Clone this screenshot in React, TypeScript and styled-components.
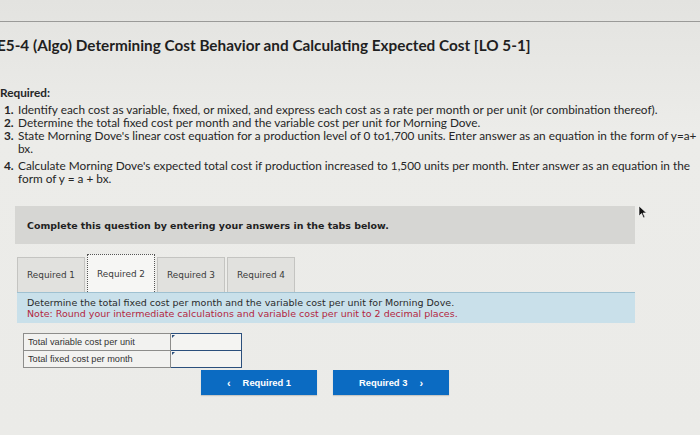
import styled, { createGlobalStyle } from "styled-components";

const GlobalStyle = createGlobalStyle`
  html, body {
    margin: 0;
    padding: 0;
    background: #e9e9e6;
  }
`;

const Frame = styled.div`
  position: relative;
`;

const Page = styled.div`
  width: 700px;
  height: 435px;
  overflow: hidden;
  background: linear-gradient(180deg, #e3e3e0 0%, #ecece9 30%, #ebebe8 100%);
  color: #262626;
  font-family: Lato, "Open Sans", sans-serif;
`;

const TopRule = styled.div`
  height: 21px;
  border-bottom: 1px solid #9a9a98;
`;

const Title = styled.h1`
  margin: 13px 0 0 -3px;
  font-size: 15.3px;
  line-height: 20px;
  font-weight: 700;
  color: #1f1f1f;
  white-space: nowrap;
`;

const Required = styled.div`
  margin: 31px 0 0 0;
  font-size: 11.8px;
  line-height: 14px;
  font-weight: 700;
`;

const List = styled.ol`
  margin: 3px 0 0 0;
  padding: 0 0 0 4px;
  list-style: none;
  font-size: 11.8px;
  line-height: 13px;
`;

const Item = styled.li<{ $gap?: number }>`
  display: flex;
  gap: 3px;
  margin-top: ${(p) => p.$gap ?? 0}px;
  white-space: nowrap;
`;

const Num = styled.span`
  font-weight: 700;
  width: 11px;
  flex: none;
`;

const Workspace = styled.div`
  margin: 21px 0 0 15px;
  width: 620px;
  font-family: "DejaVu Sans", Verdana, sans-serif;
`;

const Banner = styled.div`
  background: #d6d6d3;
  height: 38px;
  display: flex;
  align-items: center;
  padding-left: 12px;
  font-size: 9.45px;
  font-weight: 700;
  color: #222;
`;

const Tabs = styled.div`
  display: flex;
  margin: 10px 0 0 2px;
  gap: 2px;
  align-items: flex-end;
`;

const Tab = styled.div<{ $active?: boolean }>`
  width: 68px;
  height: ${(p) => (p.$active ? 38 : 35)}px;
  box-sizing: border-box;
  display: flex;
  align-items: center;
  justify-content: center;
  font-size: 8.9px;
  color: #3a3a3a;
  background: ${(p) => (p.$active ? "#f6f6f4" : "#e1e1de")};
  border: ${(p) => (p.$active ? "1px dotted #555" : "1px solid #c4c4c1")};
  border-bottom: none;
`;

const Instructions = styled.div`
  margin-left: 2px;
  background: #c9e0ea;
  border-top: 1px solid #9fc1d1;
  padding: 5px 10px 4px;
  font-size: 9.5px;
  line-height: 10.5px;
  color: #2a2a2a;
`;

const Note = styled.div`
  color: #b3263f;
`;

const AnswerTable = styled.table`
  margin: 10px 0 0 8px;
  border-collapse: collapse;
  font-family: "Liberation Sans", Arial, sans-serif;
  font-size: 9.2px;
  color: #333;
`;

const LabelCell = styled.td`
  width: 138px;
  height: 16px;
  padding: 0 4px;
  border: 1px solid #8d8d8b;
  background: #f2f2f0;
`;

const InputCell = styled.td`
  width: 70px;
  height: 16px;
  padding: 0;
  border: 1.5px solid #2b4f7c;
  background: #f4f4f2;
  position: relative;

  &::before {
    content: "";
    position: absolute;
    left: 1px;
    top: 1px;
    border-left: 3px solid #2b4f7c;
    border-bottom: 3px solid transparent;
  }
`;

const NavRow = styled.div`
  display: flex;
  gap: 16px;
  margin: 2px 0 0 186px;
`;

const NavButton = styled.button`
  width: 116px;
  height: 25px;
  border: none;
  background: #0b6bc2;
  color: #fff;
  font-family: "Liberation Sans", Arial, sans-serif;
  font-weight: 700;
  font-size: 9.4px;
  display: flex;
  align-items: center;
  justify-content: center;
  gap: 12px;
  box-shadow: 0 1px 1px rgba(0, 0, 0, 0.15);
`;

const Chevron = styled.span`
  font-size: 11px;
`;

const Cursor = styled.svg`
  position: absolute;
  left: 638px;
  top: 205px;
`;

export default function App() {
  return (
    <Frame>
      <GlobalStyle />
      <Page>
        <TopRule />
        <Title>E5-4 (Algo) Determining Cost Behavior and Calculating Expected Cost [LO 5-1]</Title>
        <Required>Required:</Required>
        <List>
          <Item>
            <Num>1.</Num>
            <span>
              Identify each cost as variable, fixed, or mixed, and express each cost as a rate per month or per unit (or combination thereof).
            </span>
          </Item>
          <Item>
            <Num>2.</Num>
            <span>Determine the total fixed cost per month and the variable cost per unit for Morning Dove.</span>
          </Item>
          <Item>
            <Num>3.</Num>
            <span>
              State Morning Dove's linear cost equation for a production level of 0 to1,700 units. Enter answer as an equation in the form of y=a+
              <br />
              bx.
            </span>
          </Item>
          <Item $gap={4}>
            <Num>4.</Num>
            <span>
              Calculate Morning Dove's expected total cost if production increased to 1,500 units per month. Enter answer as an equation in the
              <br />
              form of y = a + bx.
            </span>
          </Item>
        </List>
        <Workspace>
          <Banner>Complete this question by entering your answers in the tabs below.</Banner>
          <Tabs>
            <Tab>Required 1</Tab>
            <Tab $active>Required 2</Tab>
            <Tab>Required 3</Tab>
            <Tab>Required 4</Tab>
          </Tabs>
          <Instructions>
            Determine the total fixed cost per month and the variable cost per unit for Morning Dove.
            <Note>Note: Round your intermediate calculations and variable cost per unit to 2 decimal places.</Note>
          </Instructions>
          <AnswerTable>
            <tbody>
              <tr>
                <LabelCell>Total variable cost per unit</LabelCell>
                <InputCell />
              </tr>
              <tr>
                <LabelCell>Total fixed cost per month</LabelCell>
                <InputCell />
              </tr>
            </tbody>
          </AnswerTable>
          <NavRow>
            <NavButton>
              <Chevron>‹</Chevron>Required 1
            </NavButton>
            <NavButton>
              Required 3<Chevron>›</Chevron>
            </NavButton>
          </NavRow>
        </Workspace>
      </Page>
      <Cursor width="10" height="14" viewBox="0 0 10 14">
        <path d="M1 1 L1 11 L3.5 8.5 L5.5 13 L7 12.3 L5 8 L8.5 8 Z" fill="#111" stroke="#fff" strokeWidth="0.6" />
      </Cursor>
    </Frame>
  );
}
